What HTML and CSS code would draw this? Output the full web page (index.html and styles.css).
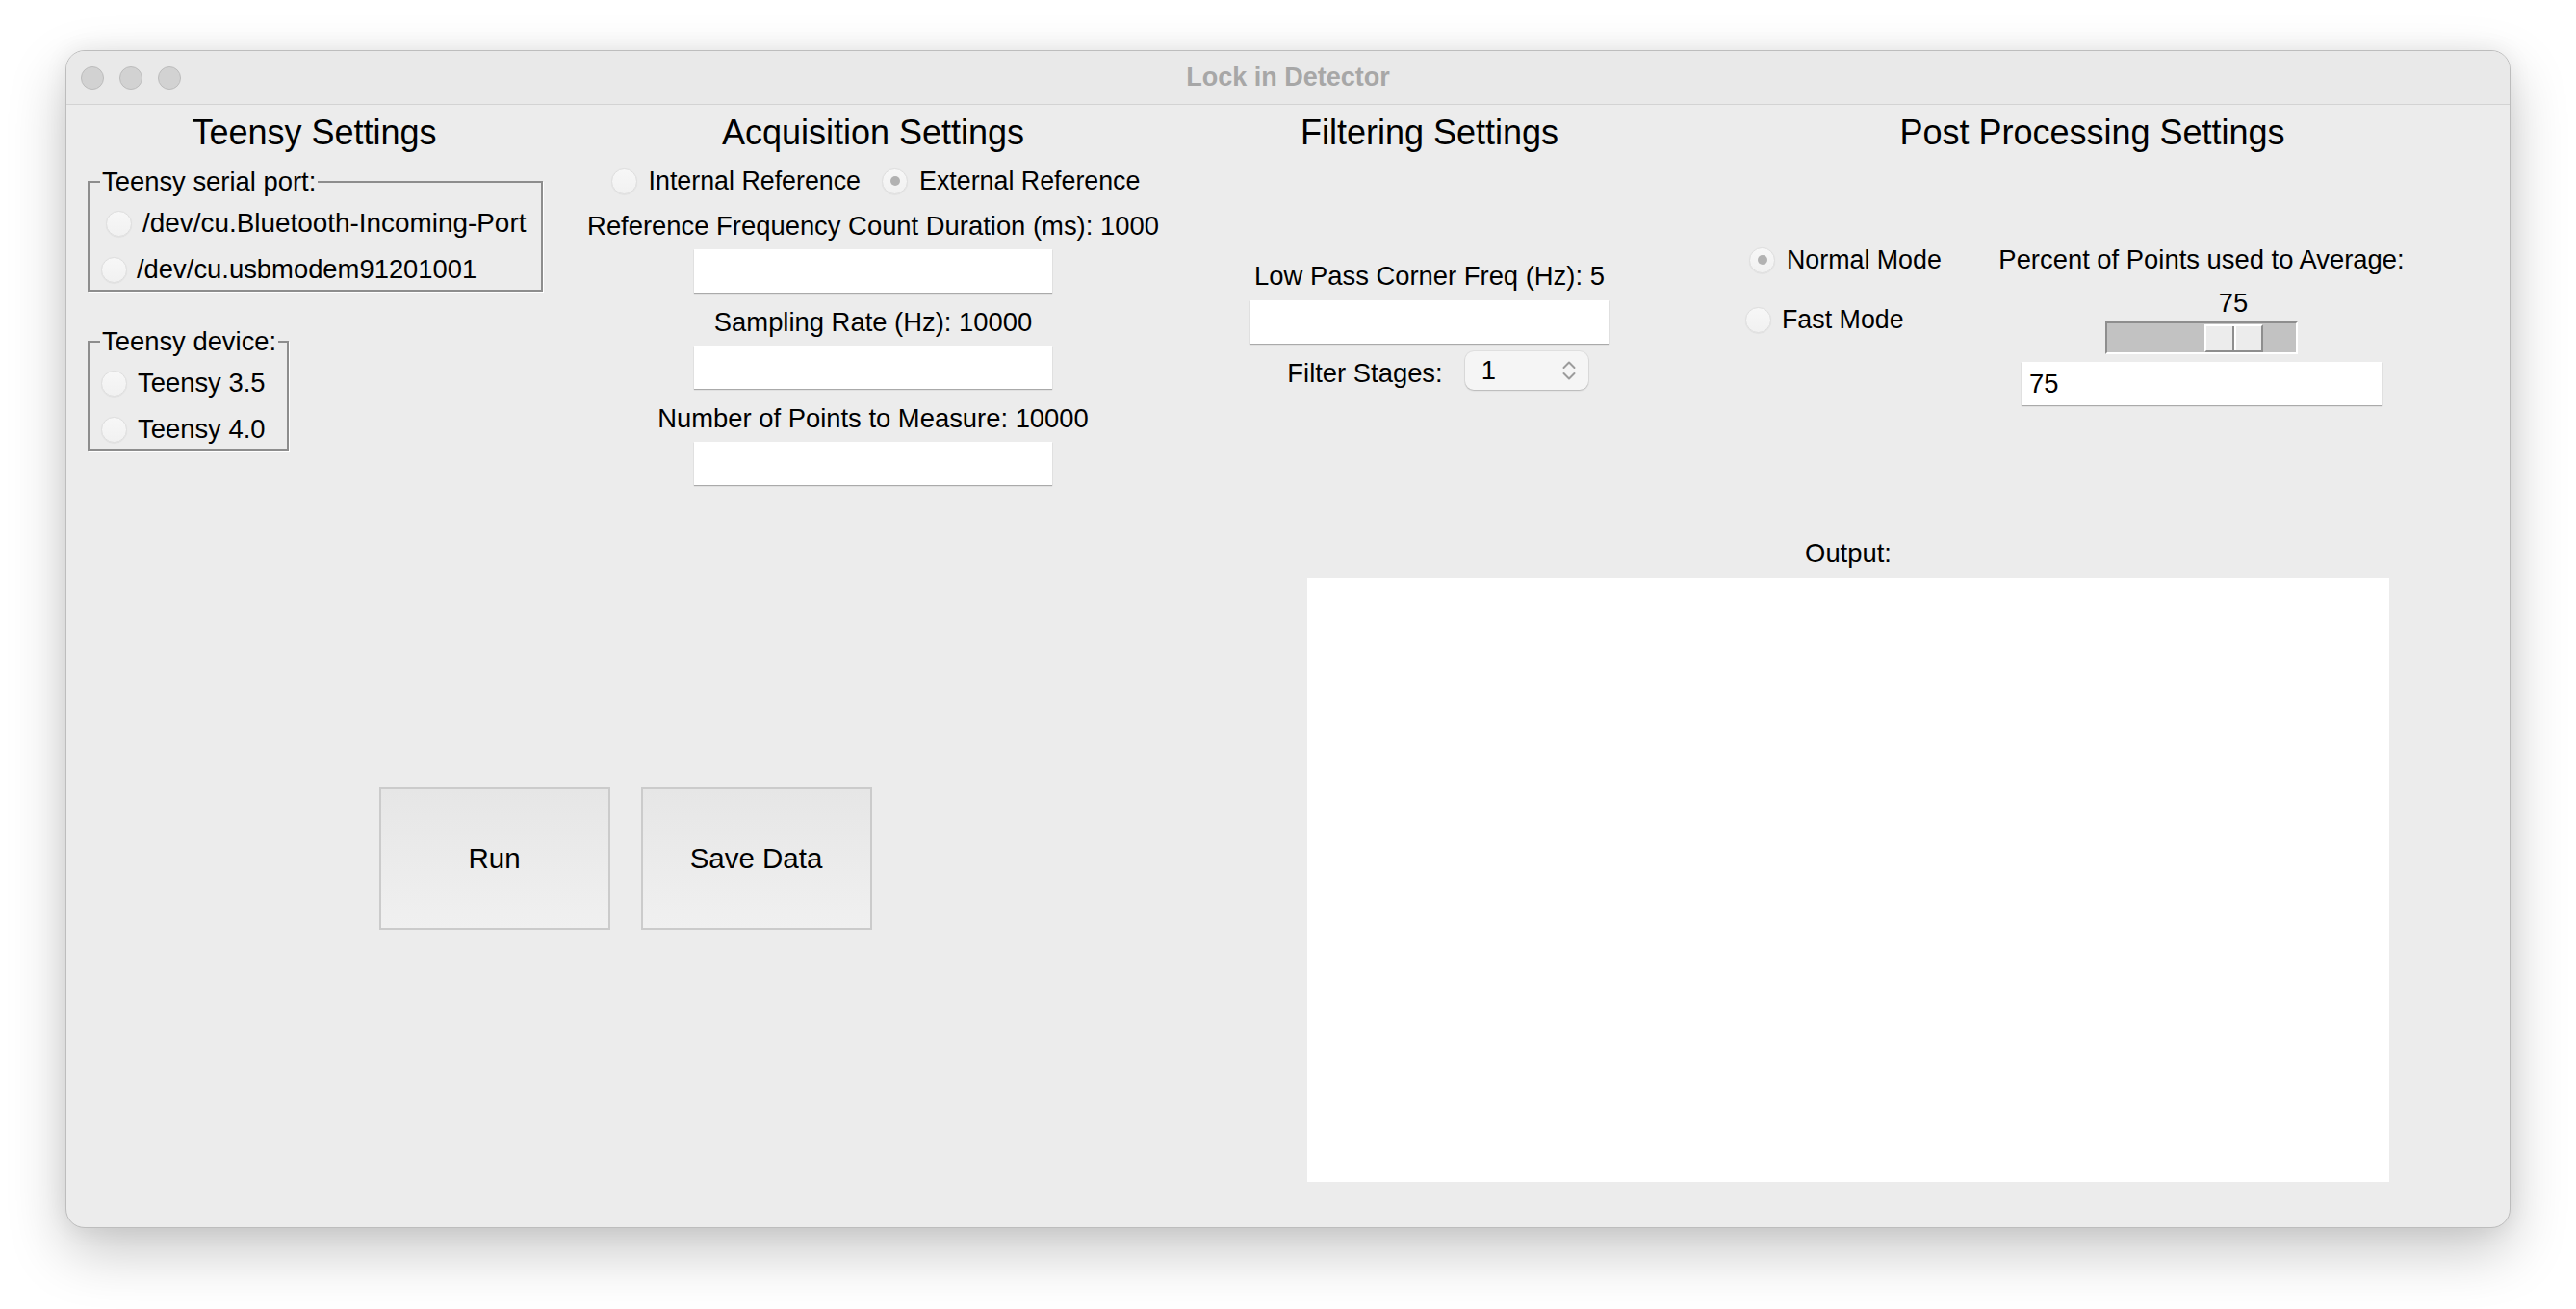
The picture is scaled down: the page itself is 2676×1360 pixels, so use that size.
FILE: index.html
```html
<!DOCTYPE html>
<html lang="en">
<head>
<meta charset="utf-8">
<title>Lock in Detector</title>
<link rel="stylesheet" href="styles.css">
</head>
<body>
<div class="window">
  <header class="titlebar">
    <div class="lights">
      <span class="light"></span><span class="light"></span><span class="light"></span>
    </div>
    <div class="title">Lock in Detector</div>
    <div class="titlebar-spacer"></div>
  </header>

  <main class="content">
    <section class="col col-teensy">
      <h2 class="heading">Teensy Settings</h2>
      <fieldset class="group group-port">
        <legend>Teensy serial port:</legend>
        <div class="radio port-bt"><span class="radio-dot"></span><span>/dev/cu.Bluetooth-Incoming-Port</span></div>
        <div class="radio port-usb"><span class="radio-dot"></span><span>/dev/cu.usbmodem91201001</span></div>
      </fieldset>
      <fieldset class="group group-device">
        <legend>Teensy device:</legend>
        <div class="radio dev-item"><span class="radio-dot"></span><span>Teensy 3.5</span></div>
        <div class="radio dev-item"><span class="radio-dot"></span><span>Teensy 4.0</span></div>
      </fieldset>
    </section>

    <section class="col col-acq">
      <h2 class="heading">Acquisition Settings</h2>
      <div class="ref-row">
        <div class="radio ref-item"><span class="radio-dot"></span><span>Internal Reference</span></div>
        <div class="radio ref-item"><span class="radio-dot is-checked"></span><span>External Reference</span></div>
      </div>
      <div class="field-label first">Reference Frequency Count Duration (ms): 1000</div>
      <div class="entry"></div>
      <div class="field-label">Sampling Rate (Hz): 10000</div>
      <div class="entry"></div>
      <div class="field-label">Number of Points to Measure: 10000</div>
      <div class="entry"></div>
    </section>

    <section class="col col-filter">
      <h2 class="heading">Filtering Settings</h2>
      <div class="field-label lowpass">Low Pass Corner Freq (Hz): 5</div>
      <div class="entry entry-lowpass"></div>
      <div class="spin-row">
        <span class="spin-label">Filter Stages:</span>
        <div class="spinbox">
          <span class="spin-value">1</span>
          <svg class="spin-arrows" width="16" height="24" viewBox="0 0 16 24" aria-hidden="true">
            <path d="M2.5 9 L8 3.5 L13.5 9" fill="none" stroke="#9c9c9c" stroke-width="2" stroke-linecap="round" stroke-linejoin="round"/>
            <path d="M2.5 15 L8 20.5 L13.5 15" fill="none" stroke="#9c9c9c" stroke-width="2" stroke-linecap="round" stroke-linejoin="round"/>
          </svg>
        </div>
      </div>
    </section>

    <section class="col col-post">
      <h2 class="heading">Post Processing Settings</h2>
      <div class="post-body">
        <div class="modes">
          <div class="radio mode-normal"><span class="radio-dot is-checked"></span><span>Normal Mode</span></div>
          <div class="radio mode-fast"><span class="radio-dot"></span><span>Fast Mode</span></div>
        </div>
        <div class="average">
          <div class="avg-label">Percent of Points used to Average:</div>
          <div class="scale-value">75</div>
          <div class="scale">
            <div class="scale-handle" style="margin-left:101px"><span class="half"></span><span class="half"></span></div>
          </div>
          <div class="entry entry-avg">75</div>
        </div>
      </div>
    </section>

    <section class="actions">
      <button class="btn" type="button">Run</button>
      <button class="btn" type="button">Save Data</button>
    </section>

    <section class="output">
      <div class="output-label">Output:</div>
      <div class="output-box"></div>
    </section>
  </main>
</div>
</body>
</html>
```

FILE: styles.css
```css
* {
  box-sizing: border-box;
}

html,
body {
  margin: 0;
  padding: 0;
  background: #ffffff;
}

body {
  min-height: 1360px;
  font-family: "Liberation Sans", Arial, Helvetica, sans-serif;
  font-size: 27.4px;
  color: #000;
}

.window {
  margin: 52px 0 0 68px;
  width: 2540px;
  height: 1224px;
  background: #ececec;
  border: 1px solid #bdbdbd;
  border-radius: 20px;
  box-shadow: 0 24px 60px rgba(0, 0, 0, 0.22), 0 0 24px rgba(0, 0, 0, 0.07);
  overflow: hidden;
  display: flex;
  flex-direction: column;
}

/* ---------- title bar ---------- */
.titlebar {
  height: 56px;
  flex: none;
  background: #e9e9e9;
  border-bottom: 1px solid #d3d3d3;
  display: grid;
  grid-template-columns: 1fr auto 1fr;
  align-items: center;
}

.lights {
  display: flex;
  gap: 16px;
  padding-left: 15px;
}

.light {
  width: 24px;
  height: 24px;
  border-radius: 50%;
  background: #d2d2d2;
  border: 1px solid #bcbcbc;
}

.title {
  font-weight: bold;
  font-size: 27px;
  color: #a7a7a7;
  line-height: 30px;
  margin-top: -2px;
}

/* ---------- content grid ---------- */
.content {
  flex: 1;
  display: grid;
  grid-template-columns: 515px 646px 510px 867px;
  grid-template-rows: 451px 1fr;
}

.col {
  display: flex;
  flex-direction: column;
  align-items: center;
}

.heading {
  margin: 9px 0 0;
  font-size: 36px;
  font-weight: normal;
  line-height: 40px;
  white-space: nowrap;
}

/* ---------- radio ---------- */
.radio {
  display: flex;
  align-items: center;
  gap: 11px;
  height: 30px;
  line-height: 30px;
  white-space: nowrap;
}

.radio-dot {
  flex: none;
  width: 27px;
  height: 27px;
  border-radius: 50%;
  background: linear-gradient(#f7f7f7, #f1f1f1);
  border: 1px solid #dedede;
  box-shadow: 0 0.5px 1px rgba(0, 0, 0, 0.08);
  display: flex;
  align-items: center;
  justify-content: center;
}

.radio-dot.is-checked::before {
  content: "";
  width: 10px;
  height: 10px;
  border-radius: 50%;
  background: #b2b2b2;
}

/* ---------- teensy column ---------- */
.col-teensy {
  align-items: flex-start;
}

.col-teensy .heading {
  align-self: center;
}

.group {
  margin: 0 0 0 22px;
  padding: 9px 0 2px 11px;
  border: 2px solid #8d8d8d;
  box-shadow: 1px 1px 0 #ffffff;
  min-inline-size: 0;
}

.group legend {
  padding: 0 2px;
  line-height: 30px;
  white-space: nowrap;
}

.group .radio {
  height: 38px;
}

.group .radio + .radio {
  margin-top: 10px;
}

.group-port {
  margin-top: 16px;
  width: 473px;
}

.port-bt {
  margin-left: 6px;
  font-size: 27.9px;
}

.port-usb {
  margin-left: 1px;
  gap: 10px;
}

.group-device {
  margin-top: 37px;
  width: 209px;
}

.dev-item {
  margin-left: 1px;
}

/* ---------- acquisition column ---------- */
.ref-row {
  margin-top: 15px;
  padding-left: 5px;
  display: flex;
  gap: 22px;
}

.ref-item {
  gap: 12px;
  font-size: 26.8px;
}

.field-label {
  margin-top: 16px;
  line-height: 30px;
  white-space: nowrap;
}

.field-label.first {
  margin-top: 17px;
}

.entry {
  margin-top: 9px;
  width: 372px;
  height: 45px;
  background: #ffffff;
  box-shadow: 0 1px 1px rgba(0, 0, 0, 0.28);
}

/* ---------- filtering column ---------- */
.field-label.lowpass {
  margin-top: 114px;
}

.entry-lowpass {
  margin-top: 10px;
}

.spin-row {
  margin-top: 8px;
  padding-left: 17px;
  display: flex;
  align-items: center;
  gap: 23px;
}

.spin-label {
  line-height: 30px;
  margin-top: 6px;
}

.spinbox {
  width: 128px;
  height: 40px;
  border-radius: 9px;
  background: #f5f5f5;
  box-shadow: 0 0 0 1px rgba(0, 0, 0, 0.05), 0 1px 1.5px rgba(0, 0, 0, 0.18);
  display: flex;
  align-items: center;
  justify-content: space-between;
  padding: 0 12px 0 17px;
}

.spin-value {
  line-height: 30px;
}

.spin-arrows {
  display: block;
}

/* ---------- post processing column ---------- */
.col-post {
  align-items: flex-start;
}

.col-post .heading {
  align-self: center;
}

.post-body {
  margin: 97px 0 0 73px;
  display: flex;
}

.modes {
  width: 264px;
  display: flex;
  flex-direction: column;
  gap: 32px;
  font-size: 26.8px;
}

.mode-normal {
  margin-left: 4px;
  gap: 12px;
}

.mode-fast {
  gap: 11px;
}

.average {
  width: 420px;
  display: flex;
  flex-direction: column;
  align-items: center;
}

.avg-label {
  line-height: 30px;
  white-space: nowrap;
}

.scale-value {
  margin-top: 15px;
  padding-left: 66px;
  line-height: 30px;
}

.scale {
  margin-top: 4px;
  width: 200px;
  height: 34px;
  border-style: solid;
  border-width: 2px;
  border-color: #8e8e8e #ffffff #ffffff #8e8e8e;
  background: #c2c2c2;
  padding-top: 1px;
  display: flex;
}

.scale-handle {
  width: 61px;
  height: 29px;
  border-style: solid;
  border-width: 2px;
  border-color: #ffffff #8e8e8e #8e8e8e #ffffff;
  background: #ececec;
  display: flex;
}

.scale-handle .half {
  flex: 1;
}

.scale-handle .half:first-child {
  border-right: 2px solid #8e8e8e;
}

.scale-handle .half:last-child {
  border-left: 2px solid #ffffff;
}

.entry-avg {
  margin-top: 8px;
  width: 374px;
  padding-left: 8px;
  line-height: 45px;
}

/* ---------- bottom: actions ---------- */
.actions {
  grid-column: 1 / 3;
  display: flex;
  justify-content: center;
  align-items: flex-start;
  gap: 32px;
  padding-top: 258px;
}

.btn {
  margin: 0;
  width: 240px;
  height: 148px;
  border: 2px solid #cbcbcb;
  background: linear-gradient(#e6e6e6, #f0f0f0);
  font-family: inherit;
  font-size: 29.5px;
  color: #000;
  padding: 0;
}

/* ---------- bottom: output ---------- */
.output {
  grid-column: 3 / 5;
  display: flex;
  flex-direction: column;
  align-items: center;
  padding-left: 3px;
}

.output-label {
  line-height: 30px;
}

.output-box {
  margin-top: 10px;
  width: 1124px;
  height: 628px;
  background: #ffffff;
}
```
